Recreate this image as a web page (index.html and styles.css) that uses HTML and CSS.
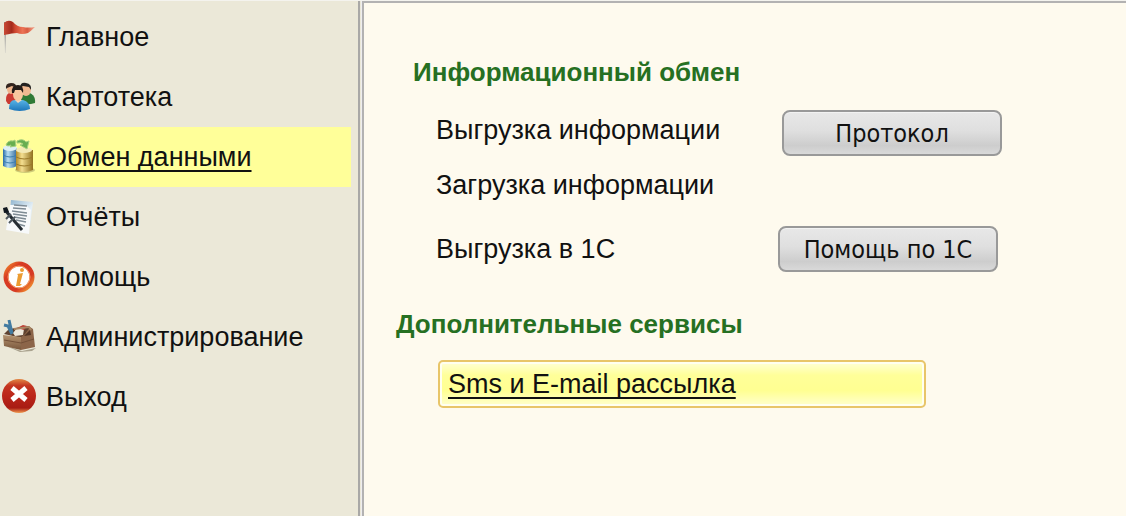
FILE: index.html
```html
<!DOCTYPE html>
<html lang="ru">
<head>
    <meta charset="utf-8">
    <title>Обмен данными</title>
    <link rel="stylesheet" href="styles.css">
</head>
<body>
    <nav class="menu">
        <a class="menu-item" href="#">
            <svg class="icon" viewBox="0 0 36 36">
                <defs>
                    <linearGradient id="flag"><stop offset="0" stop-color="#c94a35"/><stop offset=".25" stop-color="#a32a1c"/><stop offset=".35" stop-color="#cc452e"/><stop offset=".6" stop-color="#ec7456"/><stop offset=".75" stop-color="#d95b40"/><stop offset="1" stop-color="#f5a88f"/></linearGradient>
                    <linearGradient id="pole" x2="0" y2="1"><stop offset="0" stop-color="#888"/><stop offset="1" stop-color="#dddbd0"/></linearGradient>
                </defs>
                <path d="M4 3h2v31h-1z" fill="url(#pole)"/>
                <path d="M4 4Q8 0 13 3Q17 8 23 8Q28 9 35 8Q31 12 28 14Q22 16 17 14Q13 14 4 16z" fill="url(#flag)"/>
            </svg>
            <span>Главное</span>
        </a>
        <a class="menu-item" href="#">
            <svg class="icon" viewBox="0 0 36 36">
                <defs>
                    <linearGradient id="blue" x2="0" y2="1"><stop offset="0" stop-color="#58b4e6"/><stop offset="1" stop-color="#1d76ba"/></linearGradient>
                </defs>
                <path d="M6 22Q5 14 12 13l6 4v8H8z" fill="#cb3a32"/>
                <path d="M19 16l6-3Q36 14 35 24q-6 2-12 1z" fill="#2f7a36"/>
                <ellipse cx="11" cy="10" rx="4" ry="5" fill="#efb58d"/>
                <path d="M6 10Q5 4 11 4t5 5l-4-2-5 2z" fill="#33251e"/>
                <ellipse cx="26" cy="11" rx="5" ry="6" fill="#f0b991"/>
                <path d="M20 9Q20 3 26 4t5 7l-2-3-6-1z" fill="#242322"/>
                <path d="M9 30Q9 21 15 21h8q7 2 7 9-10 4-21 0z" fill="url(#blue)"/>
                <path d="M15 21l3 3 4-3z" fill="#f9d6b6"/>
                <ellipse cx="18" cy="15" rx="5" ry="7" fill="#f8c69e"/>
                <path d="M12 14Q11 6 18 6q6 0 5 8l-2-3-6 0-1 3z" fill="#241c18"/>
            </svg>
            <span>Картотека</span>
        </a>
        <a class="menu-item menu-item-active" href="#">
            <svg class="icon" viewBox="0 0 36 36">
                <defs>
                    <linearGradient id="tank"><stop offset="0" stop-color="#276aa8"/><stop offset=".35" stop-color="#b6ddf2"/><stop offset="1" stop-color="#34699b"/></linearGradient>
                    <linearGradient id="gold"><stop offset="0" stop-color="#b38a26"/><stop offset=".35" stop-color="#f4df91"/><stop offset="1" stop-color="#90701f"/></linearGradient>
                </defs>
                <ellipse cx="25" cy="31" rx="10" ry="3" fill="#9d985a" opacity=".5"/>
                <path d="M3 9v18q7 4 14 0V9z" fill="url(#tank)"/>
                <ellipse cx="10" cy="9" rx="7" ry="3" fill="#ddeff6"/>
                <path d="M3 16q7 4 14 0M3 22q7 4 14 0" fill="none" stroke="#397daf"/>
                <path d="M16 11v20q8 4 17 0V11z" fill="url(#gold)"/>
                <ellipse cx="24" cy="11" rx="8" ry="3" fill="#f4eab5"/>
                <path d="M16 18q8 4 17 0M16 25q8 4 17 0" fill="none" stroke="#9a7928"/>
                <path d="M6 6Q8 1 13 2l2-1 1 6-6 1 1-2-3 1zM17 2q6-3 9 1l3-1-2 8-7-4 3-1q-2-2-6-1z" fill="#68ae50" stroke="#a4cf7e"/>
            </svg>
            <span>Обмен данными</span>
        </a>
        <a class="menu-item" href="#">
            <svg class="icon" viewBox="0 0 36 36">
                <defs>
                    <linearGradient id="paper" y2="1"><stop offset="0" stop-color="#8fb4cf"/><stop offset=".6" stop-color="#e4eff6"/></linearGradient>
                </defs>
                <path d="M11 1l22 2-3 24-21-2z" fill="url(#paper)"/>
                <path d="M10 6l16 0 5 5-2 24-23-4z" fill="#f7f9fa"/>
                <path d="M14 6l13 1M13 9l13 1M12 12l15 2M13 15l14 2M14 18l12 2M16 21l10 2M18 25l7 2" stroke="#7e8b94" stroke-width="1.5"/>
                <path d="M5 11l17 20" stroke="#252c32" stroke-width="3"/>
                <path d="M11 15l-5 5M15 18l-6 6" stroke="#4d565d" stroke-width="2"/>
                <path d="M3 9l4-1 2 5-5 1z" fill="#10171e"/>
            </svg>
            <span>Отчёты</span>
        </a>
        <a class="menu-item" href="#">
            <svg class="icon" viewBox="0 0 36 36">
                <defs>
                    <linearGradient id="ring" y2="1"><stop offset="0" stop-color="#f28b2e"/><stop offset=".25" stop-color="#d83b22"/><stop offset=".7" stop-color="#d63a24"/><stop offset="1" stop-color="#f7a532"/></linearGradient>
                </defs>
                <circle cx="19" cy="18" r="13" fill="#fff" stroke="url(#ring)" stroke-width="5"/>
                <circle cx="19" cy="18" r="11" fill="none" stroke="#f7a46b"/>
                <circle cx="22" cy="11" r="2" fill="#ec9c32"/>
                <path d="M17 15l6-1-3 11h2l-2 2h-4l2-11z" fill="#ec9c32"/>
            </svg>
            <span>Помощь</span>
        </a>
        <a class="menu-item" href="#">
            <svg class="icon" viewBox="0 0 36 36">
                <defs>
                    <linearGradient id="wood" x2="0" y2="1"><stop offset="0" stop-color="#b59370"/><stop offset="1" stop-color="#78563b"/></linearGradient>
                </defs>
                <path d="M6 27l16 5 14-3-4 3-12 1z" fill="#aaa38f"/>
                <path d="M4 15L9 10l20-3 4 8-11 4z" fill="#604331"/>
                <path d="M13 14l4-5 7 1-1 6-8 1z" fill="#eee8dc"/>
                <path d="M17 9l6-3 4 1-3 4z" fill="#bd3e35"/>
                <path d="M3 16l18 2v13L4 27z" fill="url(#wood)"/>
                <path d="M21 18l4-3 5-7 3 2 2 18-14 3z" fill="#8c6549"/>
                <path d="M24 17l6-6 1 5z" fill="#4f3425"/>
                <path d="M14 10l15-2 2 3" fill="none" stroke="#a88663" stroke-width="2"/>
                <path d="M4 21l17 3 13-4" fill="none" stroke="#735038"/>
                <path d="M9 1l3 13M4 6l4 1 4 8" fill="none" stroke="#427ba1" stroke-width="3"/>
            </svg>
            <span>Администрирование</span>
        </a>
        <a class="menu-item" href="#">
            <svg class="icon" viewBox="0 0 36 36">
                <defs>
                    <linearGradient id="exit" x2="0" y2="1"><stop offset="0" stop-color="#e28643"/><stop offset=".2" stop-color="#c43420"/><stop offset=".5" stop-color="#bb2619"/><stop offset=".85" stop-color="#a81c14"/><stop offset="1" stop-color="#f29b50"/></linearGradient>
                </defs>
                <circle cx="19" cy="17" r="17" fill="url(#exit)"/>
                <path d="M12 9l14 12M26 9L12 21" stroke="#fff" stroke-width="5"/>
            </svg>
            <span>Выход</span>
        </a>
    </nav>
    <main class="content">
        <h2 class="title">Информационный обмен</h2>
        <div class="row row-import">
            <span class="label">Выгрузка информации</span>
            <button class="button" type="button">Протокол</button>
        </div>
        <div class="row row-plain">
            <span class="label">Загрузка информации</span>
        </div>
        <div class="row row-export">
            <span class="label">Выгрузка в 1С</span>
            <button class="button" type="button">Помощь по 1С</button>
        </div>
        <h2 class="title title-extra">Дополнительные сервисы</h2>
        <a class="service" href="#"><span>Sms и E-mail рассылка</span></a>
    </main>
</body>
</html>
```
FILE: styles.css
```css
* {
    box-sizing: border-box;
}

body {
    margin: 0;
    display: flex;
    min-height: 100vh;
    background-color: #ebe8d8;
    border-top: 1px solid #f4f3ee;
    color: #111;
    font-family: "Liberation Sans", Arial, sans-serif;
    font-size: 27px;
    line-height: 32px;
}

.menu {
    flex: 0 0 360px;
    padding: 6px 7px 0 0;
    border-right: 2px solid #a9a8a6;
}

.menu-item {
    display: flex;
    align-items: center;
    height: 60px;
    gap: 10px;
    color: #111;
    text-decoration: none;
}

.menu-item-active {
    background-color: #ffff99;
}

.menu-item-active span, .service span {
    text-decoration: underline;
    text-decoration-thickness: 2px;
    text-decoration-skip-ink: none;
    text-underline-offset: 4px;
}

.icon {
    width: 36px;
    height: 36px;
}

.content {
    flex: 1;
    min-width: 0;
    margin-left: 2px;
    padding: 51px 24px 24px 32px;
    background-color: #fefaee;
    border-top: 2px solid #b3b2b2;
    border-left: 2px solid #b3b2b2;
    outline: 1px solid #eeedef;
}

.title {
    margin: 0 0 20px;
    padding-left: 17px;
    color: #267022;
    font-size: 26px;
    line-height: 36px;
}

.row {
    display: flex;
    align-items: center;
    min-height: 46px;
    padding-left: 40px;
}

.row-import {
    align-items: flex-start;
}

.row-import .label {
    padding-top: 4px;
}

.label {
    flex: 0 0 346px;
}

.row-plain {
    margin: 6px 0 18px;
}

.row-export .label {
    flex-basis: 342px;
}

.button {
    width: 220px;
    height: 46px;
    padding: 0;
    border: 2px solid #999;
    border-radius: 8px;
    background: linear-gradient(#e8e8e8, #dfdfdf 45%, #cdcdcd 80%, #d9d9d9);
    box-shadow: inset 0 1px 0 #f2f2f2;
    color: #111;
    font-family: "DejaVu Sans Condensed", Tahoma, sans-serif;
    font-size: 25px;
}

.title-extra {
    margin: 34px 0 18px;
    padding-left: 0;
}

.service {
    display: flex;
    align-items: center;
    width: 488px;
    max-width: 100%;
    height: 48px;
    margin-left: 42px;
    padding: 0 8px;
    border: 2px solid #e8c569;
    border-radius: 5px;
    background: linear-gradient(#ffffd8, #ffff99 30%, #ffff92 65%, #ffffd0);
    box-shadow: inset 0 0 0 2px #fffff0;
    color: #111;
    text-decoration: none;
}
```
